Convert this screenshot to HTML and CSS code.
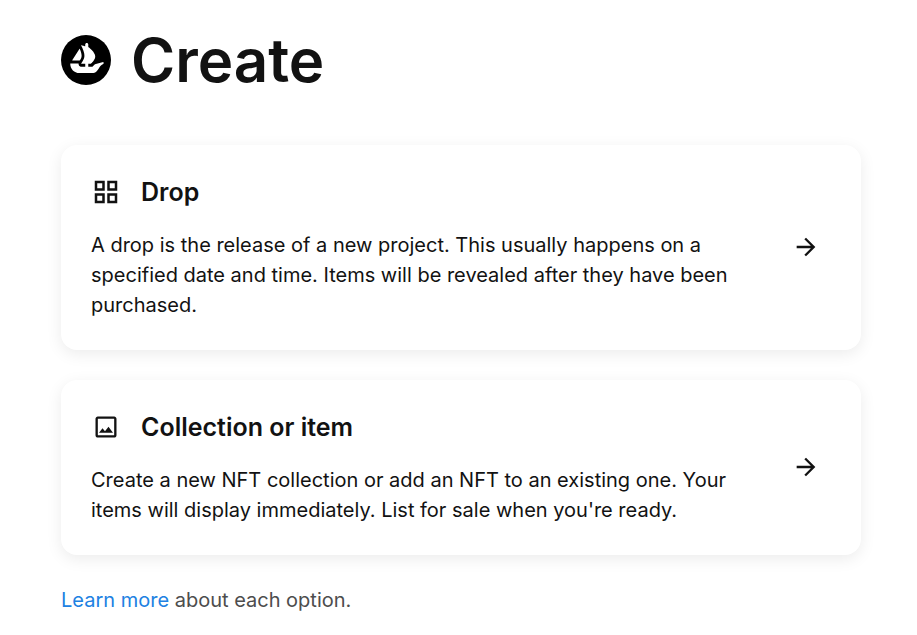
FILE: index.html
```html
<!DOCTYPE html>
<html lang="en">
<head>
<meta charset="utf-8">
<title>Create</title>
<link rel="stylesheet" href="styles.css">
</head>
<body>
<main class="page">
  <header class="page-header">
    <svg class="logo" viewBox="0 0 90 90" aria-hidden="true"><circle cx="45" cy="45" r="45"/><path class="logo-boat" transform="translate(46.6 41.4) scale(1.08) translate(-46.6 -43)" d="M22.203 46.512L22.392 46.206L34.101 27.891C34.272 27.63 34.677 27.657 34.803 27.945C36.756 32.328 38.448 37.782 37.656 41.175C37.323 42.57 36.396 44.46 35.352 46.206C35.217 46.458 35.073 46.71 34.911 46.953C34.839 47.061 34.713 47.124 34.578 47.124H22.545C22.221 47.124 22.032 46.773 22.203 46.512ZM74.376 52.812C74.376 52.983 74.277 53.127 74.133 53.19C73.224 53.577 70.119 55.008 68.832 56.799C65.538 61.38 63.027 67.932 57.402 67.932H33.948C25.632 67.932 18.9 61.173 18.9 52.83V52.56C18.9 52.344 19.08 52.164 19.305 52.164H32.373C32.634 52.164 32.823 52.398 32.805 52.659C32.706 53.505 32.868 54.378 33.273 55.17C34.047 56.745 35.658 57.726 37.395 57.726H43.866V52.677H37.467C37.143 52.677 36.945 52.299 37.134 52.029C37.206 51.921 37.278 51.813 37.368 51.687C37.971 50.823 38.835 49.491 39.699 47.97C40.284 46.944 40.851 45.846 41.31 44.748C41.4 44.55 41.472 44.343 41.553 44.145C41.679 43.794 41.805 43.461 41.895 43.137C41.985 42.858 42.066 42.57 42.138 42.3C42.354 41.364 42.444 40.374 42.444 39.348C42.444 38.943 42.426 38.52 42.39 38.124C42.372 37.683 42.318 37.242 42.264 36.801C42.228 36.414 42.156 36.027 42.084 35.631C41.985 35.046 41.859 34.461 41.715 33.876L41.661 33.651C41.553 33.246 41.454 32.868 41.328 32.463C40.959 31.203 40.545 29.97 40.095 28.818C39.933 28.359 39.753 27.918 39.564 27.486C39.294 26.82 39.015 26.217 38.763 25.65C38.628 25.389 38.52 25.155 38.412 24.912C38.286 24.642 38.16 24.372 38.025 24.111C37.935 23.913 37.827 23.724 37.755 23.544L36.963 22.086C36.855 21.888 37.035 21.645 37.251 21.708L42.201 23.049H42.219L42.858 23.238L43.569 23.436L43.83 23.508V20.574C43.83 19.152 44.964 18 46.377 18C47.079 18 47.718 18.288 48.168 18.756C48.627 19.224 48.915 19.863 48.915 20.574V24.939L49.446 25.083C49.482 25.101 49.527 25.119 49.563 25.146C49.689 25.236 49.878 25.38 50.112 25.56C50.301 25.704 50.499 25.884 50.733 26.073C51.21 26.46 51.786 26.955 52.407 27.522C52.569 27.666 52.731 27.81 52.884 27.963C53.685 28.71 54.585 29.583 55.449 30.555C55.692 30.834 55.926 31.104 56.169 31.401C56.403 31.698 56.664 31.986 56.88 32.274C57.177 32.661 57.483 33.066 57.762 33.489C57.888 33.687 58.041 33.894 58.158 34.092C58.518 34.623 58.824 35.172 59.121 35.721C59.247 35.973 59.373 36.252 59.481 36.522C59.814 37.26 60.075 38.007 60.237 38.763C60.291 38.925 60.327 39.096 60.345 39.258V39.294C60.399 39.51 60.417 39.744 60.435 39.987C60.507 40.752 60.471 41.526 60.309 42.3C60.237 42.624 60.147 42.93 60.039 43.263C59.922 43.578 59.814 43.902 59.67 44.217C59.391 44.856 59.067 45.504 58.68 46.098C58.554 46.323 58.401 46.557 58.257 46.782C58.095 47.016 57.924 47.241 57.78 47.457C57.573 47.736 57.357 48.024 57.132 48.285C56.934 48.555 56.736 48.825 56.511 49.068C56.205 49.437 55.908 49.779 55.593 50.112C55.413 50.328 55.215 50.553 55.008 50.751C54.81 50.976 54.603 51.174 54.423 51.354C54.108 51.669 53.856 51.903 53.64 52.11L53.126 52.569C53.055 52.641 52.956 52.677 52.857 52.677H48.915V57.726H53.874C54.981 57.726 56.034 57.339 56.889 56.61C57.177 56.358 58.437 55.269 59.931 53.622C59.985 53.559 60.048 53.523 60.12 53.505L73.791 49.554C74.043 49.482 74.295 49.671 74.295 49.932V52.812H74.376Z"/></svg>
    <h1 class="page-title">Create</h1>
  </header>

  <section class="options">
    <a class="card" href="#">
      <div class="card-body">
        <div class="card-heading">
          <svg class="card-icon" viewBox="0 0 24 24" aria-hidden="true"><path d="M3 3v8h8V3H3zm6 6H5V5h4v4zm-6 4v8h8v-8H3zm6 6H5v-4h4v4zm4-16v8h8V3h-8zm6 6h-4V5h4v4zm-6 4v8h8v-8h-8zm6 6h-4v-4h4v4z"/></svg>
          <h2 class="card-title">Drop</h2>
        </div>
        <p class="card-text">A drop is the release of a new project. This usually happens on a specified date and time. Items will be revealed after they have been purchased.</p>
      </div>
      <svg class="card-arrow" viewBox="0 0 24 24" aria-hidden="true"><path d="M12 4l-1.41 1.41L16.17 11H4v2h12.17l-5.58 5.59L12 20l8-8z"/></svg>
    </a>

    <a class="card" href="#">
      <div class="card-body">
        <div class="card-heading">
          <svg class="card-icon" viewBox="-0.86 -0.86 25.72 25.72" aria-hidden="true"><path d="M19 5v14H5V5h14m0-2H5c-1.1 0-2 .9-2 2v14c0 1.1.9 2 2 2h14c1.1 0 2-.9 2-2V5c0-1.1-.9-2-2-2zm-4.86 8.86l-3 3.87L9 13.14 6 17h12l-3.86-5.14z"/></svg>
          <h2 class="card-title">Collection or item</h2>
        </div>
        <p class="card-text">Create a new NFT collection or add an NFT to an existing one. Your items will display immediately. List for sale when you're ready.</p>
      </div>
      <svg class="card-arrow" viewBox="0 0 24 24" aria-hidden="true"><path d="M12 4l-1.41 1.41L16.17 11H4v2h12.17l-5.58 5.59L12 20l8-8z"/></svg>
    </a>
  </section>

  <p class="footnote"><a class="footnote-link" href="#">Learn more</a> about each option.</p>
</main>
</body>
</html>
```

FILE: styles.css
```css
* {
  box-sizing: border-box;
}

html,
body {
  margin: 0;
  background: #ffffff;
}

body {
  font-family: Inter, "Liberation Sans", sans-serif;
  color: #121212;
}

.page {
  width: 800px;
  margin-left: 61px;
  padding: 30px 0 20px;
}

.page-header {
  display: flex;
  align-items: center;
  gap: 20px;
  height: 60px;
}

.logo {
  width: 50px;
  height: 50px;
  flex: none;
  fill: #000000;
}

.logo-boat {
  fill: #ffffff;
}

.page-title {
  margin: 0;
  font-size: 60px;
  font-weight: 600;
  line-height: 60px;
}

.options {
  display: flex;
  flex-direction: column;
  gap: 30px;
  margin-top: 55px;
}

.card {
  display: flex;
  align-items: center;
  justify-content: space-between;
  padding: 30px 41px 30px 30px;
  border-radius: 16px;
  background: #ffffff;
  color: inherit;
  text-decoration: none;
  box-shadow: 0 4px 16px rgba(0, 0, 0, 0.08);
}

.card-body {
  width: 640px;
}

.card-heading {
  display: flex;
  align-items: center;
  gap: 20px;
  height: 34px;
}

.card-icon {
  width: 30px;
  height: 30px;
  flex: none;
  fill: #121212;
}

.card-title {
  margin: 0;
  font-size: 25px;
  font-weight: 600;
  line-height: 35px;
}

.card-text {
  margin: 21px 0 0;
  font-size: 20px;
  line-height: 30px;
}

.card-arrow {
  width: 28px;
  height: 28px;
  flex: none;
  margin-bottom: 1px;
  fill: #121212;
}

.footnote {
  margin: 30px 0 0;
  font-size: 20px;
  line-height: 30px;
  color: #4d4d4d;
}

.footnote-link {
  color: #2081e2;
  text-decoration: none;
}
```
